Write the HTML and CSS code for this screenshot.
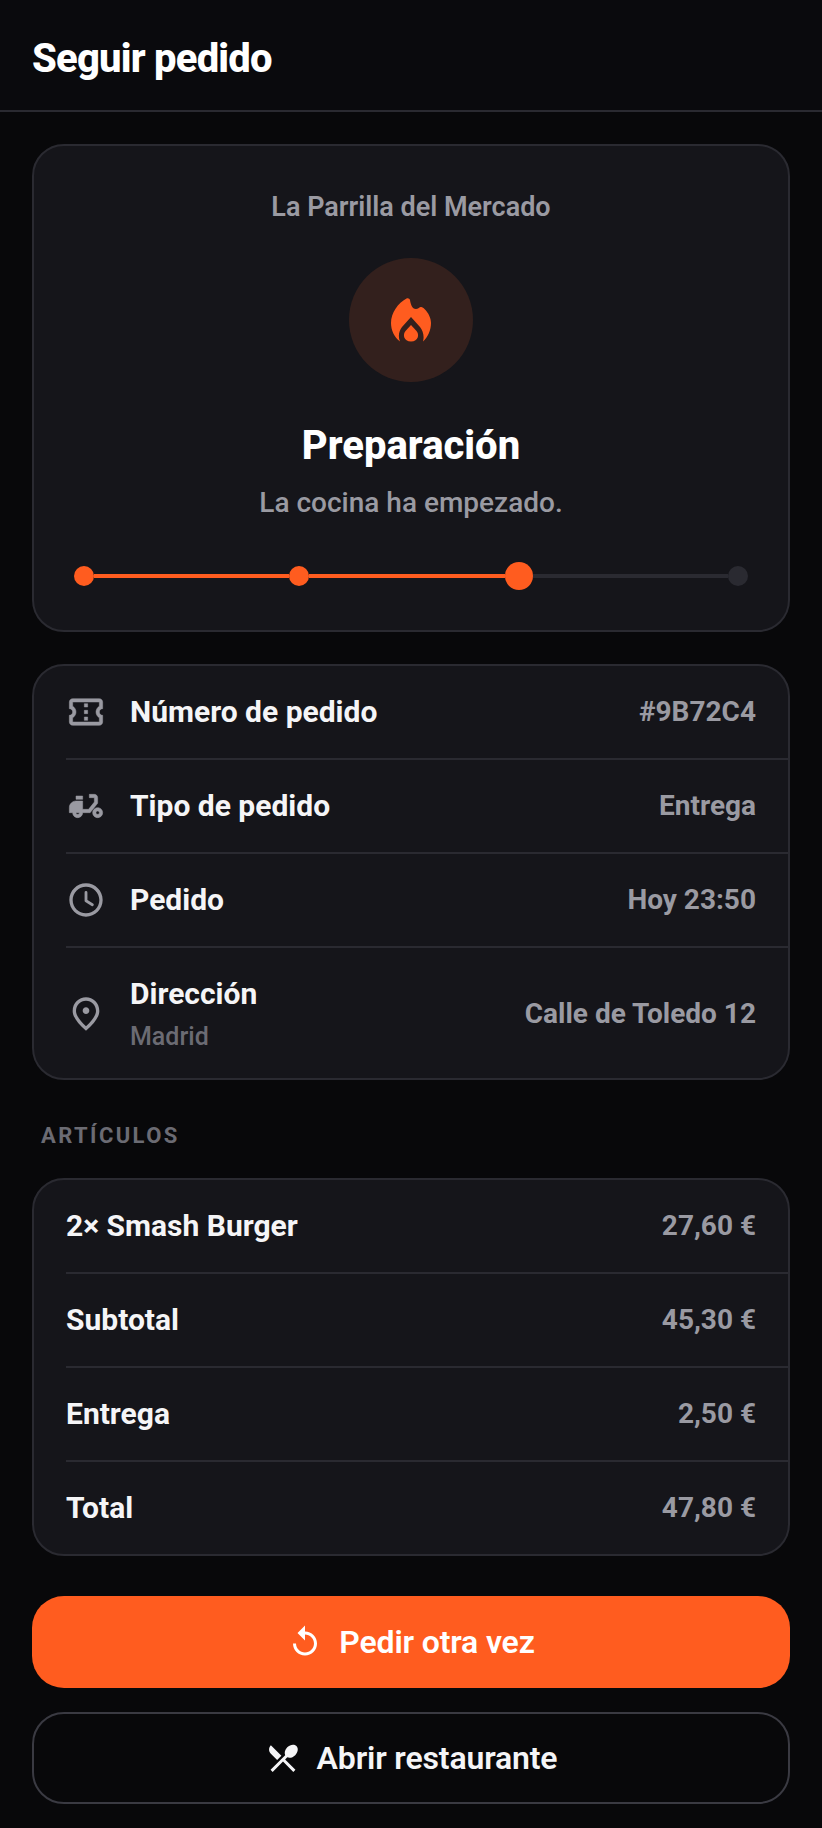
FILE: index.html
```html
<!DOCTYPE html>
<html lang="es">
<head>
    <meta charset="UTF-8">
    <meta name="viewport" content="width=device-width, initial-scale=1.0">
    <title>Seguir pedido</title>
    <link rel="stylesheet" href="styles.css">
</head>
<body>
    <header class="topbar">
        <h1 class="topbar-title">Seguir pedido</h1>
    </header>

    <main class="content">
        <!-- Estado del pedido -->
        <section class="card status">
            <div class="status-name">La Parrilla del Mercado</div>
            <div class="status-circle">
                <svg class="flame" viewBox="0 0 40 44" fill="#ff5c1f">
                    <path d="M15.5 .5C17 -.3 18.6 .5 19 2C19.6 6 21 11 25 11C27 11 28 9.6 29.5 9C31 8.5 32.5 9.8 33.5 11C37.5 15 40 20 40 25C40 32 37 39 32 43.5C33.5 38 32 33 29 29L20 19L11 29C8 33 6.800 38 9 43.500C3 39 0 32 0 25C0 15 7 5 15.500 .5Z"/>
                    <path d="M20 27L25.500 33C28.500 36.500 27.500 43.500 20 43.500C12.500 43.500 11.500 36.500 14.500 33Z"/>
                </svg>
            </div>
            <div class="status-title">Preparación</div>
            <div class="status-sub">La cocina ha empezado.</div>
            <div class="track">
                <span class="dot done"></span>
                <span class="bar done"></span>
                <span class="dot done"></span>
                <span class="bar done"></span>
                <span class="dot now"></span>
                <span class="bar"></span>
                <span class="dot"></span>
            </div>
        </section>

        <!-- Datos del pedido -->
        <section class="card info">
            <div class="row">
                <svg class="row-icon soft" viewBox="0 0 24 24"><path d="M22 10V6c0-1.110-.9-2-2-2H4c-1.100 0-1.990.89-1.990 2v4c1.100 0 1.990.9 1.990 2s-.89 2-2 2v4c0 1.100.9 2 2 2h16c1.100 0 2-.9 2-2v-4c-1.100 0-2-.9-2-2s.9-2 2-2zm-2-1.460c-1.190.69-2 1.990-2 3.460s.81 2.770 2 3.460V18H4v-2.540c1.190-.69 2-1.990 2-3.460 0-1.480-.8-2.770-1.990-3.460L4 6h16v2.540zM11 15h2v2h-2zm0-4h2v2h-2zm0-4h2v2h-2z"/></svg>
                <div class="row-label">Número de pedido</div>
                <div class="row-value">#9B72C4</div>
            </div>
            <div class="row">
                <svg class="row-icon soft" viewBox="0 0 24 24"><path d="M19 7c0-1.100-.9-2-2-2h-3v2h3v2.650L13.520 14H10V9H6c-2.210 0-4 1.790-4 4v3h2c0 1.660 1.340 3 3 3s3-1.340 3-3h4.480L19 10.350V7zM7 17c-.55 0-1-.45-1-1h2c0 .55-.45 1-1 1z"/><path d="M6 6h4v2H6zM19 13c-1.660 0-3 1.340-3 3s1.340 3 3 3 3-1.340 3-3-1.340-3-3-3zm0 4c-.55 0-1-.45-1-1s.45-1 1-1 1 .45 1 1-.45 1-1 1z"/></svg>
                <div class="row-label">Tipo de pedido</div>
                <div class="row-value">Entrega</div>
            </div>
            <div class="row">
                <svg class="row-icon" viewBox="0 0 24 24"><path d="M11.990 2C6.470 2 2 6.480 2 12s4.470 10 9.990 10C17.520 22 22 17.520 22 12S17.520 2 11.990 2zM12 20c-4.420 0-8-3.580-8-8s3.580-8 8-8 8 3.580 8 8-3.580 8-8 8z"/><path class="clock-hand" d="M12 7.500V12.500L15.800 14.800"/></svg>
                <div class="row-label">Pedido</div>
                <div class="row-value">Hoy 23:50</div>
            </div>
            <div class="row row-tall">
                <svg class="row-icon" viewBox="0 0 24 24"><path d="M12 12c-1.100 0-2-.9-2-2s.9-2 2-2 2 .9 2 2-.9 2-2 2zm6-1.800C18 6.570 15.350 4 12 4s-6 2.570-6 6.200c0 2.340 1.950 5.440 6 9.140 4.050-3.700 6-6.800 6-9.140zM12 2c4.200 0 8 3.220 8 8.200 0 3.320-2.670 7.250-8 11.800-5.330-4.550-8-8.480-8-11.800C4 5.220 7.800 2 12 2z"/></svg>
                <div class="row-label">
                    Dirección
                    <div class="row-sub">Madrid</div>
                </div>
                <div class="row-value">Calle de Toledo 12</div>
            </div>
        </section>

        <div class="section-label">ARTÍCULOS</div>

        <!-- Artículos y totales -->
        <section class="card items">
            <div class="row">
                <div class="row-label">2× Smash Burger</div>
                <div class="row-value">27,60 €</div>
            </div>
            <div class="row">
                <div class="row-label">Subtotal</div>
                <div class="row-value">45,30 €</div>
            </div>
            <div class="row">
                <div class="row-label">Entrega</div>
                <div class="row-value">2,50 €</div>
            </div>
            <div class="row">
                <div class="row-label">Total</div>
                <div class="row-value">47,80 €</div>
            </div>
        </section>

        <button class="btn btn-primary">
            <svg class="btn-icon" viewBox="0 0 24 24"><path d="M12 5V1L7 6l5 5V7c3.310 0 6 2.690 6 6s-2.690 6-6 6-6-2.690-6-6H4c0 4.420 3.580 8 8 8s8-3.580 8-8-3.580-8-8-8z"/></svg>
            Pedir otra vez
        </button>
        <button class="btn btn-outline">
            <svg class="btn-icon" viewBox="0 0 24 24"><path d="M8.100 13.340l2.830-2.830L3.910 3.500c-1.560 1.560-1.560 4.090 0 5.660l4.190 4.180zm6.780-1.810c1.530.71 3.680.21 5.270-1.380 1.910-1.910 2.280-4.650.81-6.120-1.460-1.460-4.200-1.100-6.120.81-1.590 1.590-2.090 3.740-1.380 5.270L3.700 19.870l1.410 1.410L12 14.410l6.880 6.880 1.410-1.410L13.410 13l1.470-1.470z"/></svg>
            Abrir restaurante
        </button>
    </main>
</body>
</html>
```

FILE: styles.css
```css
body {
    margin: 0;
    background-color: #08080a;
    color: #f5f5f7;
    font-family: Roboto, "Noto Sans", sans-serif;
}

.topbar {
    height: 104px;
    padding: 6px 32px 0;
    display: flex;
    align-items: center;
    background-color: #0a0a0d;
    border-bottom: 2px solid #2a2a31;
}
.topbar-title {
    margin: 0;
    font-size: 40px;
    font-weight: 800;
    letter-spacing: -0.8px;
    color: #fff;
}

.content {
    padding: 32px 32px 0;
}

.card {
    background-color: #15151a;
    border: 2px solid #2a2a31;
    border-radius: 32px;
}

/* Estado */
.status {
    padding: 41px 40px 40px;
    display: flex;
    flex-direction: column;
    align-items: center;
}
.status-name {
    font-size: 27px;
    line-height: 40px;
    font-weight: 600;
    color: #9a9aa2;
}
.status-circle {
    width: 124px;
    height: 124px;
    margin-top: 31px;
    border-radius: 50%;
    background-color: #33201d;
    display: flex;
    align-items: center;
    justify-content: center;
}
.flame {
    width: 40px;
    height: 44px;
}
.status-title {
    margin-top: 40px;
    font-size: 40px;
    line-height: 48px;
    font-weight: 800;
    color: #fff;
}
.status-sub {
    margin-top: 15px;
    font-size: 28px;
    line-height: 36px;
    font-weight: 500;
    color: #9a9aa2;
}
.track {
    align-self: stretch;
    margin-top: 41px;
    display: flex;
    align-items: center;
}
.dot {
    width: 20px;
    height: 20px;
    border-radius: 50%;
    background-color: #2a2a31;
    flex: none;
}
.dot.done {
    background-color: #ff5c1f;
}
.dot.now {
    width: 28px;
    height: 28px;
    background-color: #ff5c1f;
}
.bar {
    flex: 1;
    height: 4px;
    background-color: #2a2a31;
}
.bar.done {
    background-color: #ff5c1f;
}

/* Filas */
.info {
    margin-top: 32px;
}
.row {
    margin-left: 32px;
    padding: 26px 32px 26px 0;
    display: flex;
    align-items: center;
    border-bottom: 2px solid #2a2a31;
}
.row:last-child {
    border-bottom: none;
}
.row-tall {
    padding-bottom: 24px;
}
.row-icon {
    width: 40px;
    height: 40px;
    margin-right: 24px;
    flex: none;
    fill: #9a9aa2;
}
.row-icon.soft {
    stroke: #9a9aa2;
    stroke-width: 0.3;
    stroke-linejoin: round;
}
.clock-hand {
    fill: none;
    stroke: #9a9aa2;
    stroke-width: 1.7;
    stroke-linecap: round;
    stroke-linejoin: round;
}
.row-label {
    flex: 1;
    font-size: 30px;
    line-height: 40px;
    font-weight: 700;
    color: #f5f5f7;
}
.row-sub {
    margin-top: 6px;
    font-size: 25px;
    line-height: 34px;
    font-weight: 500;
    color: #6b6b73;
}
.row-value {
    font-size: 28px;
    line-height: 40px;
    font-weight: 700;
    color: #9a9aa2;
}

.section-label {
    margin: 42px 0 28px 9px;
    font-size: 22px;
    line-height: 28px;
    font-weight: 700;
    letter-spacing: 2.4px;
    color: #6b6b73;
}

/* Botones */
.btn {
    width: 100%;
    height: 92px;
    display: flex;
    align-items: center;
    justify-content: center;
    gap: 16px;
    border-radius: 32px;
    font-family: inherit;
    font-size: 32px;
    font-weight: 600;
    letter-spacing: -0.15px;
    color: #fff;
}
.btn-primary {
    margin-top: 40px;
    background-color: #ff5c1f;
    border: none;
}
.btn-outline {
    margin-top: 24px;
    background-color: transparent;
    border: 2px solid #3a3a42;
    color: #f5f5f7;
}
.btn-icon {
    width: 36px;
    height: 36px;
    fill: currentColor;
    flex: none;
}
```
